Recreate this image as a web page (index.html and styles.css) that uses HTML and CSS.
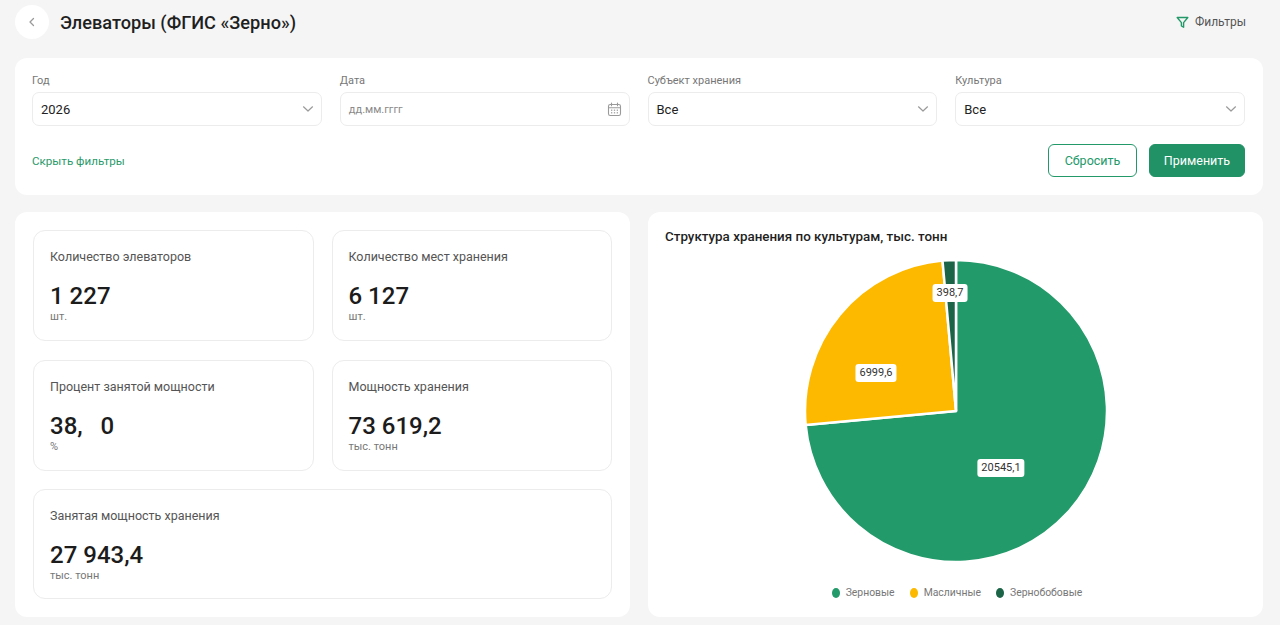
FILE: index.html
```html
<!DOCTYPE html>
<html lang="ru">
<head>
<meta charset="utf-8">
<title>Элеваторы (ФГИС «Зерно»)</title>
<link rel="stylesheet" href="styles.css">
</head>
<body>
<div class="page">
  <header class="header">
    <div class="header-left">
      <button class="back-btn" type="button">
        <svg width="10" height="10" viewBox="0 0 10 10"><path d="M6.5 1.5 L3 5 L6.5 8.5" fill="none" stroke="#9a9a9a" stroke-width="1.3" stroke-linecap="round" stroke-linejoin="round"/></svg>
      </button>
      <h1 class="title">Элеваторы (ФГИС «Зерно»)</h1>
    </div>
    <div class="filters-link">
      <svg width="13" height="13" viewBox="0 0 13 13"><path d="M1.2 1.5 H11.8 L7.6 6.6 V11.2 L5.4 10 V6.6 Z" fill="none" stroke="#23996a" stroke-width="1.4" stroke-linejoin="round"/></svg>
      <span>Фильтры</span>
    </div>
  </header>

  <section class="card filter-card">
    <div class="filter-row">
      <div class="field">
        <div class="field-label">Год</div>
        <div class="input">
          <span class="input-value">2026</span>
          <svg class="chev" width="12" height="8" viewBox="0 0 12 8"><path d="M1.5 1.8 L6 6 L10.5 1.8" fill="none" stroke="#9a9a9a" stroke-width="1.2" stroke-linecap="round" stroke-linejoin="round"/></svg>
        </div>
      </div>
      <div class="field">
        <div class="field-label">Дата</div>
        <div class="input">
          <span class="input-placeholder">дд.мм.гггг</span>
          <svg class="cal" width="15" height="15" viewBox="0 0 15 15"><rect x="1.5" y="2.5" width="12" height="11" rx="1.8" fill="none" stroke="#9a9a9a" stroke-width="1.1"/><path d="M1.5 5.8 H13.5 M4.5 1 V3.8 M10.5 1 V3.8" fill="none" stroke="#9a9a9a" stroke-width="1.1" stroke-linecap="round"/><g fill="#9a9a9a"><rect x="4" y="7.6" width="1.3" height="1.2"/><rect x="6.85" y="7.6" width="1.3" height="1.2"/><rect x="9.7" y="7.6" width="1.3" height="1.2"/><rect x="4" y="10.2" width="1.3" height="1.2"/><rect x="6.85" y="10.2" width="1.3" height="1.2"/><rect x="9.7" y="10.2" width="1.3" height="1.2"/></g></svg>
        </div>
      </div>
      <div class="field">
        <div class="field-label">Субъект хранения</div>
        <div class="input">
          <span class="input-value">Все</span>
          <svg class="chev" width="12" height="8" viewBox="0 0 12 8"><path d="M1.5 1.8 L6 6 L10.5 1.8" fill="none" stroke="#9a9a9a" stroke-width="1.2" stroke-linecap="round" stroke-linejoin="round"/></svg>
        </div>
      </div>
      <div class="field">
        <div class="field-label">Культура</div>
        <div class="input">
          <span class="input-value">Все</span>
          <svg class="chev" width="12" height="8" viewBox="0 0 12 8"><path d="M1.5 1.8 L6 6 L10.5 1.8" fill="none" stroke="#9a9a9a" stroke-width="1.2" stroke-linecap="round" stroke-linejoin="round"/></svg>
        </div>
      </div>
    </div>
    <div class="actions-row">
      <a class="hide-link">Скрыть фильтры</a>
      <div class="buttons">
        <button class="btn btn-outline" type="button">Сбросить</button>
        <button class="btn btn-primary" type="button">Применить</button>
      </div>
    </div>
  </section>

  <div class="lower">
    <section class="card stats-card">
      <div class="stat">
        <div class="stat-label">Количество элеваторов</div>
        <div class="stat-value">1 227</div>
        <div class="stat-unit">шт.</div>
      </div>
      <div class="stat">
        <div class="stat-label">Количество мест хранения</div>
        <div class="stat-value">6 127</div>
        <div class="stat-unit">шт.</div>
      </div>
      <div class="stat">
        <div class="stat-label">Процент занятой мощности</div>
        <div class="stat-value">38,&nbsp;&nbsp;&nbsp;0</div>
        <div class="stat-unit">%</div>
      </div>
      <div class="stat">
        <div class="stat-label">Мощность хранения</div>
        <div class="stat-value">73 619,2</div>
        <div class="stat-unit">тыс. тонн</div>
      </div>
      <div class="stat stat-wide">
        <div class="stat-label">Занятая мощность хранения</div>
        <div class="stat-value">27 943,4</div>
        <div class="stat-unit">тыс. тонн</div>
      </div>
    </section>

    <section class="card chart-card">
      <h2 class="chart-title">Структура хранения по культурам, тыс. тонн</h2>
      <div class="pie-wrap">
        <svg class="pie" width="304" height="304" viewBox="0 0 304 304">
          <path d="M152,152 L152,1 A151,151 0 1 1 1.65,165.98 Z" fill="#239a6a" stroke="#fff" stroke-width="2.5" stroke-linejoin="round"/>
          <path d="M152,152 L1.65,165.98 A151,151 0 0 1 138.5,1.61 Z" fill="#fdb900" stroke="#fff" stroke-width="2.5" stroke-linejoin="round"/>
          <path d="M152,152 L138.5,1.61 A151,151 0 0 1 152,1 Z" fill="#1c6448" stroke="#fff" stroke-width="2.5" stroke-linejoin="round"/>
        </svg>
        <span class="pie-label lbl-green">20545,1</span>
        <span class="pie-label lbl-yellow">6999,6</span>
        <span class="pie-label lbl-dark">398,7</span>
      </div>
      <div class="legend">
        <div class="legend-item"><span class="dot dot-green"></span>Зерновые</div>
        <div class="legend-item"><span class="dot dot-yellow"></span>Масличные</div>
        <div class="legend-item"><span class="dot dot-dark"></span>Зернобобовые</div>
      </div>
    </section>
  </div>
</div>
</body>
</html>
```

FILE: styles.css
```css
* { box-sizing: border-box; }

html, body {
  margin: 0;
  padding: 0;
  background: #f5f5f5;
  font-family: Roboto, "Noto Sans", "DejaVu Sans", sans-serif;
  color: #222;
}

.page {
  width: 1280px;
  height: 625px;
  padding: 5px 17px 8px 15px;
  overflow: hidden;
}

.header {
  display: flex;
  align-items: center;
  justify-content: space-between;
  height: 34px;
  margin-bottom: 19px;
  padding-right: 17px;
}

.header-left {
  display: flex;
  align-items: center;
  gap: 11px;
}

.back-btn {
  width: 34px;
  height: 34px;
  border-radius: 50%;
  border: none;
  background: #fff;
  display: flex;
  align-items: center;
  justify-content: center;
  padding: 0;
}

.title {
  margin: 0;
  font-size: 18.2px;
  font-weight: 500;
  color: #1f1f1f;
}

.filters-link {
  display: flex;
  align-items: center;
  gap: 6px;
  font-size: 12px;
  color: #555;
}

.card {
  background: #fff;
  border-radius: 12px;
}

.filter-card {
  padding: 16px 18px 18px 17px;
}

.filter-row {
  display: grid;
  grid-template-columns: repeat(4, 1fr);
  gap: 18px;
}

.field-label {
  font-size: 11px;
  color: #777;
  line-height: 14px;
  margin-bottom: 4px;
}

.input {
  height: 34px;
  border: 1px solid #ececec;
  border-radius: 7px;
  display: flex;
  align-items: center;
  justify-content: space-between;
  padding: 0 7px 0 8px;
}

.input-value {
  font-size: 13px;
  color: #222;
}

.input-placeholder {
  font-size: 11px;
  color: #8a8a8a;
}

.chev { margin-right: 0; }

.actions-row {
  margin-top: 18px;
  display: flex;
  align-items: center;
  justify-content: space-between;
}

.hide-link {
  font-size: 11.6px;
  color: #2a9a6b;
}

.buttons {
  display: flex;
  gap: 12px;
}

.btn {
  height: 33px;
  border-radius: 6px;
  font-family: inherit;
  font-size: 12.5px;
  padding: 0 12px;
}

.btn-outline {
  width: 89px;
  background: #fff;
  color: #23996a;
  border: 1px solid #23996a;
}

.btn-primary {
  width: 96px;
  background: #219266;
  color: #fff;
  border: 1px solid #219266;
}

.lower {
  margin-top: 17px;
  display: grid;
  grid-template-columns: 615px 615px;
  gap: 18px;
  height: 405px;
}

.stats-card {
  padding: 18px;
  display: grid;
  grid-template-columns: 1fr 1fr;
  grid-template-rows: 111px 111px 110px;
  column-gap: 18px;
  row-gap: 18.5px;
}

.stat {
  border: 1px solid #ececec;
  border-radius: 12px;
  padding: 18px 16px 0 16px;
}

.stat-wide { grid-column: 1 / span 2; }

.stat-label {
  font-size: 12.5px;
  color: #555;
  line-height: 16px;
}

.stat-value {
  margin-top: 17px;
  font-size: 24px;
  font-weight: 500;
  color: #1c1c1c;
  line-height: 28px;
}

.stat-unit {
  font-size: 11px;
  color: #777;
  line-height: 13px;
  margin-top: 0;
}

.chart-card {
  padding: 16px 17px 0 17px;
  display: flex;
  flex-direction: column;
  align-items: center;
}

.chart-title {
  align-self: flex-start;
  margin: 0;
  font-size: 13.4px;
  font-weight: 500;
  color: #1f1f1f;
  line-height: 17px;
}

.pie-wrap {
  position: relative;
  width: 304px;
  height: 304px;
  margin-top: 14px;
  margin-left: 1px;
}

.pie { display: block; }

.pie-label {
  position: absolute;
  transform: translate(-50%, -50%);
  background: #fff;
  border-radius: 3px;
  font-size: 11px;
  color: #333;
  padding: 2px 4px;
  line-height: 14px;
  white-space: nowrap;
}

.lbl-green { left: 197px; top: 209px; }
.lbl-yellow { left: 72px; top: 114px; }
.lbl-dark { left: 146px; top: 34px; }

.legend {
  margin-top: 23px;
  display: flex;
  gap: 15px;
  font-size: 10.4px;
  color: #777;
  margin-left: 3px;
}

.legend-item {
  display: flex;
  align-items: center;
  gap: 6px;
}

.dot {
  width: 8px;
  height: 10px;
  border-radius: 50%;
  display: inline-block;
}

.dot-green { background: #239a6a; }
.dot-yellow { background: #fdb900; }
.dot-dark { background: #1c6448; }
```
